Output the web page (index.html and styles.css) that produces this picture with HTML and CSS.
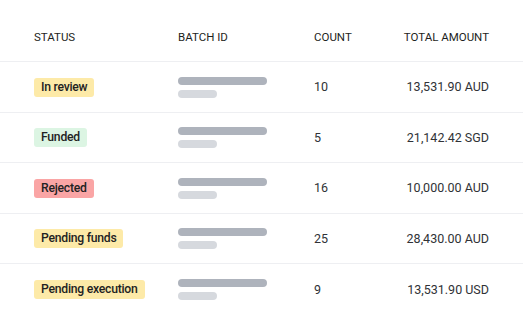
FILE: index.html
```html
<!DOCTYPE html>
<html>
<head>
<meta charset="utf-8">
<link rel="stylesheet" href="styles.css">
</head>
<body>
<div class="table">
  <div class="row head">
    <div>STATUS</div>
    <div>BATCH ID</div>
    <div>COUNT</div>
    <div class="amt">TOTAL AMOUNT</div>
  </div>
  <div class="row">
    <div><span class="badge yellow">In review</span></div>
    <div class="bars"><span class="bar long"></span><span class="bar short"></span></div>
    <div>10</div>
    <div class="amt">13,531.90 AUD</div>
  </div>
  <div class="row">
    <div><span class="badge green">Funded</span></div>
    <div class="bars"><span class="bar long"></span><span class="bar short"></span></div>
    <div>5</div>
    <div class="amt">21,142.42 SGD</div>
  </div>
  <div class="row">
    <div><span class="badge red">Rejected</span></div>
    <div class="bars"><span class="bar long"></span><span class="bar short"></span></div>
    <div>16</div>
    <div class="amt">10,000.00 AUD</div>
  </div>
  <div class="row">
    <div><span class="badge yellow">Pending funds</span></div>
    <div class="bars"><span class="bar long"></span><span class="bar short"></span></div>
    <div>25</div>
    <div class="amt">28,430.00 AUD</div>
  </div>
  <div class="row last">
    <div><span class="badge yellow">Pending execution</span></div>
    <div class="bars"><span class="bar long"></span><span class="bar short"></span></div>
    <div>9</div>
    <div class="amt">13,531.90 USD</div>
  </div>
</div>
</body>
</html>
```

FILE: styles.css
```css
html, body {
  margin: 0;
  padding: 0;
  background: #fff;
}
body {
  font-family: Roboto, "Liberation Sans", sans-serif;
  color: #303236;
  width: 523px;
  height: 323px;
  overflow: hidden;
}
.row {
  display: grid;
  grid-template-columns: 144px 136px 1fr auto;
  align-items: center;
  padding: 0 34px;
  height: 50.5px;
  box-sizing: border-box;
  border-bottom: 1px solid #eeeff2;
  font-size: 12.5px;
}
.row.last {
  border-bottom: none;
}
.row.head {
  height: 62px;
  align-items: start;
  padding-top: 30px;
  font-size: 11.5px;
  color: #1e1f22;
}
.amt {
  text-align: right;
}
.badge {
  display: inline-block;
  height: 19px;
  line-height: 19px;
  padding: 0 7px;
  border-radius: 3px;
  font-weight: 500;
  font-size: 12.2px;
  letter-spacing: -0.25px;
  color: #222;
  margin-top: 1px;
}
.yellow { background: #fdeaa8; }
.green { background: #dcf5e3; }
.red { background: #faa5a5; }
.bars {
  display: flex;
  flex-direction: column;
  gap: 5px;
  margin-top: 1px;
}
.bar {
  display: block;
  height: 8px;
  border-radius: 4px;
}
.bar.long { width: 89px; background: #aeb3bc; }
.bar.short { width: 39px; background: #d6d9de; }
```
